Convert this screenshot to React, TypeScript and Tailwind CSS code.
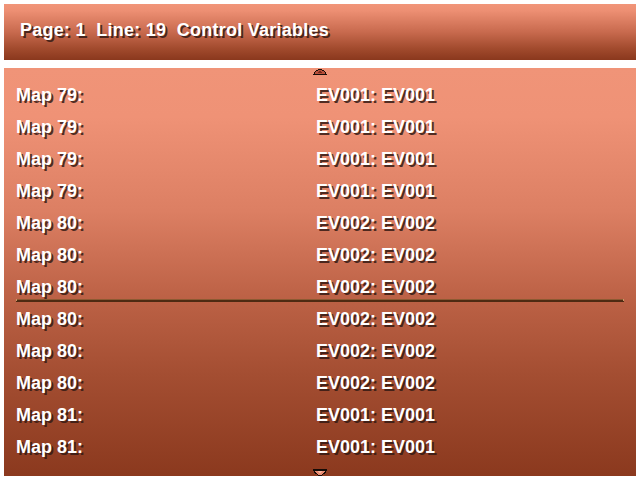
const rows = [
  { map: "Map 79:", ev: "EV001: EV001" },
  { map: "Map 79:", ev: "EV001: EV001" },
  { map: "Map 79:", ev: "EV001: EV001" },
  { map: "Map 79:", ev: "EV001: EV001" },
  { map: "Map 80:", ev: "EV002: EV002" },
  { map: "Map 80:", ev: "EV002: EV002" },
  { map: "Map 80:", ev: "EV002: EV002", marker: true },
  { map: "Map 80:", ev: "EV002: EV002" },
  { map: "Map 80:", ev: "EV002: EV002" },
  { map: "Map 80:", ev: "EV002: EV002" },
  { map: "Map 81:", ev: "EV001: EV001" },
  { map: "Map 81:", ev: "EV001: EV001" },
];

const textStyle =
  "font-['Liberation_Sans',Arial,sans-serif] text-[18px] font-bold leading-[32px] text-white [text-shadow:2px_2px_0_rgba(52,26,20,0.85)] whitespace-pre";

function UpArrow() {
  return (
    <svg width="14" height="6" viewBox="0 0 14 6" className="block">
      <path d="M5 0h4v1h2v1h1v1h1v2h1v1H0V5h1V3h1V2h1V1h2z" fill="#1a0d08" />
      <path d="M5 1h4v1h2v1h1v2H2V3h1V2h2z" fill="#b8503a" />
      <path d="M6 2h2v1h1v1H5V3h1z" fill="#7a2a1a" />
    </svg>
  );
}

function DownArrow() {
  return (
    <svg width="14" height="7" viewBox="0 0 14 7" className="block">
      <path d="M0 0h14v2h-1v2h-1v1h-2v1H9v1H5V6H4V5H2V4H1V2H0z" fill="#140a06" />
      <path d="M2 2h10v1h-1v1h-1v1H9v1H5V5H4V4H3V3H2z" fill="#e98a70" />
      <path d="M5 2h4v1H8v1H6V3H5z" fill="#f6b49c" />
    </svg>
  );
}

export default function App() {
  return (
    <div className="flex h-[480px] w-[640px] flex-col gap-[8px] bg-white p-[4px]">
      <header className="h-[56px] bg-[linear-gradient(to_bottom,#f19579_0%,#ed8f73_12%,#c86a4e_50%,#a14a2d_80%,#8a381d_100%)] pl-[16px] pt-[10px]">
        <p className={`${textStyle} tracking-[0.25px]`}>Page: 1  Line: 19  Control Variables</p>
      </header>

      <section className="relative h-[408px] bg-[linear-gradient(to_bottom,#f09478_0%,#ef9276_12%,#dc7f63_35%,#be6347_55%,#a44e32_75%,#8b391e_100%)] pt-[11px]">
        <div className="absolute left-[309px] top-[1px]">
          <UpArrow />
        </div>

        {rows.map((row, index) => (
          <div key={index} className="relative flex h-[32px] pl-[12px]">
            <span className={`${textStyle} w-[300px]`}>{row.map}</span>
            <span className={textStyle}>{row.ev}</span>
            {row.marker ? (
              <div className="absolute bottom-[1px] left-[12px] right-[12px] h-[3px] border-t border-[#8c5a32] bg-[#4e2a12]">
                <div className="absolute -top-px right-0 h-[2px] w-[1px] bg-[#c89a66]" />
                <div className="absolute -top-px left-0 h-[2px] w-[1px] bg-[#c89a66]" />
              </div>
            ) : null}
          </div>
        ))}

        <div className="absolute bottom-0 left-[309px]">
          <DownArrow />
        </div>
      </section>
    </div>
  );
}
